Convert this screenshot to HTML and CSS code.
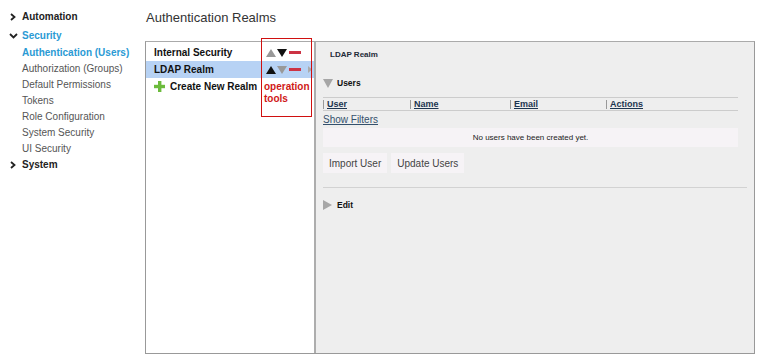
FILE: index.html
```html
<!DOCTYPE html>
<html>
<head>
<meta charset="utf-8">
<link rel="stylesheet" href="styles.css">
</head>
<body>
<div class="page">
  <nav class="nav">
    <div class="nav-top"><span class="chev"><svg width="8" height="8" viewBox="0 0 8 8"><path d="M2 1 L5.5 4 L2 7" fill="none" stroke="#222" stroke-width="1.8"/></svg></span>Automation</div>
    <div class="nav-top active"><span class="chev"><svg width="9" height="8" viewBox="0 0 9 8"><path d="M1 2 L4.5 5.5 L8 2" fill="none" stroke="#222" stroke-width="1.8"/></svg></span>Security</div>
    <div class="nav-sub selected">Authentication (Users)</div>
    <div class="nav-sub">Authorization (Groups)</div>
    <div class="nav-sub">Default Permissions</div>
    <div class="nav-sub">Tokens</div>
    <div class="nav-sub">Role Configuration</div>
    <div class="nav-sub">System Security</div>
    <div class="nav-sub">UI Security</div>
    <div class="nav-top"><span class="chev"><svg width="8" height="8" viewBox="0 0 8 8"><path d="M2 1 L5.5 4 L2 7" fill="none" stroke="#222" stroke-width="1.8"/></svg></span>System</div>
  </nav>
  <main class="main">
    <h1 class="title">Authentication Realms</h1>
    <div class="box">
      <div class="lp">
        <div class="realm">
          <span class="rname">Internal Security</span>
          <span class="tools">
            <svg width="10" height="8" viewBox="0 0 10 8"><polygon points="0,8 5,0 10,8" fill="#999"/></svg>
            <svg width="10" height="8" viewBox="0 0 10 8"><polygon points="0,0 10,0 5,8" fill="#111"/></svg>
            <svg width="12" height="3" viewBox="0 0 12 3" class="minus"><rect width="12" height="3" fill="#cc3344"/></svg>
          </span>
        </div>
        <div class="realm sel">
          <span class="rname">LDAP Realm</span>
          <span class="tools">
            <svg width="10" height="8" viewBox="0 0 10 8"><polygon points="0,8 5,0 10,8" fill="#111"/></svg>
            <svg width="10" height="8" viewBox="0 0 10 8"><polygon points="0,0 10,0 5,8" fill="#999"/></svg>
            <svg width="12" height="3" viewBox="0 0 12 3" class="minus"><rect width="12" height="3" fill="#cc3344"/></svg>
          </span>
          <svg class="caret" width="4" height="7" viewBox="0 0 4 7"><polygon points="0,0 4,3.5 0,7" fill="#aaa"/></svg>
        </div>
        <div class="realm create">
          <svg class="plus" width="11" height="11" viewBox="0 0 11 11"><rect x="4" y="0" width="3.4" height="11" fill="#6cbb3c"/><rect x="0" y="3.8" width="11" height="3.4" fill="#6cbb3c"/></svg>
          <span>Create New Realm</span>
        </div>
        <div class="annot">
          <div class="annot-text">operation<br>tools</div>
        </div>
      </div>
      <div class="rp">
        <div class="rp-title">LDAP Realm</div>
        <div class="sec-head">
          <svg width="10" height="9" viewBox="0 0 10 9"><polygon points="0,0 10,0 5,9" fill="#a6a6a6"/></svg>
          <span>Users</span>
        </div>
        <div class="tbl">
          <div class="thead">
            <div class="th c1"><span>User</span></div>
            <div class="th c2"><span>Name</span></div>
            <div class="th c3"><span>Email</span></div>
            <div class="th c4"><span>Actions</span></div>
          </div>
          <a class="filters">Show Filters</a>
          <div class="empty">No users have been created yet.</div>
        </div>
        <div class="btns">
          <button class="btn">Import User</button>
          <button class="btn">Update Users</button>
        </div>
        <div class="sep"></div>
        <div class="sec-head edit">
          <svg width="9" height="10" viewBox="0 0 9 10"><polygon points="0,0 9,5 0,10" fill="#a6a6a6"/></svg>
          <span>Edit</span>
        </div>
      </div>
    </div>
  </main>
</div>
</body>
</html>
```

FILE: styles.css
```css
* { box-sizing: border-box; }
html, body { margin: 0; padding: 0; background: #fff; }
body { font-family: "Liberation Sans", Arial, sans-serif; color: #222; }

.page { display: flex; width: 759px; height: 363px; }

.nav { width: 145px; padding: 9px 0 0 9px; font-size: 10px; }
.nav-top { display: flex; align-items: center; height: 16px; line-height: 16px; font-weight: bold; color: #222; margin-bottom: 3px; }
.nav-top.active { color: #2a9ad4; margin-bottom: 1px; }
.chev { width: 13px; display: flex; align-items: center; }
.nav-sub { height: 16px; line-height: 16px; padding-left: 13px; color: #555; }
.nav-sub.selected { color: #2a9ad4; font-weight: bold; }

.main { width: 610px; padding-top: 10px; }
.title { margin: 0 0 15px 1px; font-size: 13px; font-weight: normal; line-height: 16px; height: 16px; color: #333; }

.box { display: flex; height: 313px; border: 1px solid #999; border-top-color: #aaa; }

.lp { position: relative; width: 170px; background: #fff; border-right: 2px solid #adadad; padding-top: 2px; }
.realm { display: flex; align-items: center; height: 17px; padding-left: 8px; font-size: 10px; font-weight: bold; color: #111; }
.realm.sel { background: #b7d2f4; }
.rname { width: 112px; }
.tools { display: flex; align-items: center; gap: 1px; }
.tools .minus { margin-left: 1px; }
.caret { margin-left: 7px; }
.realm.create .plus { margin-right: 5px; }

.annot { position: absolute; left: 115px; top: -4px; width: 51px; height: 79px; border: 1px solid #d01010; }
.annot-text { position: absolute; left: 2px; top: 42px; font-size: 10px; font-weight: bold; line-height: 12px; color: #d01818; }

.rp { flex: 1; background: #eee; padding: 7px 7px 0 7px; }
.rp-title { font-size: 8px; font-weight: bold; line-height: 12px; height: 12px; padding-left: 7px; color: #1e2a38; }
.sec-head { display: flex; align-items: center; gap: 4px; margin-top: 16px; height: 12px; font-size: 8.5px; font-weight: bold; color: #111; }

.tbl { margin-top: 8px; margin-right: 9px; }
.thead { display: flex; height: 14px; border-top: 1px solid #ccc; border-bottom: 1px solid #ccc; align-items: center; }
.th { height: 9px; border-left: 1px solid #999; padding-left: 3px; font-size: 9px; font-weight: bold; line-height: 9px; color: #1d3550; text-decoration: underline; }
.c1 { width: 87px; }
.c2 { width: 100px; }
.c3 { width: 96px; }
.c4 { flex: 1; }
.filters { display: block; margin-top: 2px; height: 14px; line-height: 14px; font-size: 10px; color: #34506c; text-decoration: underline; }
.empty { margin-top: 1px; height: 19px; line-height: 19px; background: #f6f3f6; text-align: center; font-size: 8px; color: #222; }

.btns { display: flex; gap: 4px; margin-top: 6px; }
.btn { height: 20px; padding: 0 6px; border: 0; background: #f6f3f6; font-family: "Liberation Sans", Arial, sans-serif; font-size: 10px; color: #444; }

.sep { margin-top: 14px; height: 1px; background: #d2d2d2; }
.sec-head.edit { margin-top: 11px; gap: 5px; }
```
